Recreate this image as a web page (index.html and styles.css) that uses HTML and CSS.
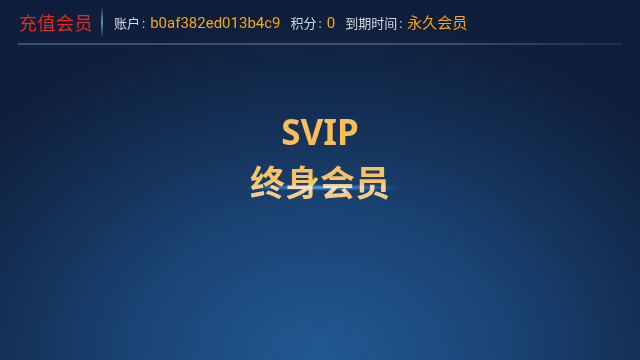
FILE: index.html
```html
<!DOCTYPE html>
<html lang="zh-CN">
<head>
  <meta charset="UTF-8" />
  <title>充值会员</title>
  <link rel="stylesheet" href="styles.css">
</head>
<body>
  <div id="app">
    <div id="header">
      <div class="title">充值会员</div>
      <div class="divider"></div>
      <div class="info">
        <span class="label">账户<span class="colon">:</span></span><span class="value">b0af382ed013b4c9</span>
        <span class="label">积分<span class="colon">:</span></span><span class="value">0</span>
        <span class="label">到期时间<span class="colon">:</span></span><span class="value cn">永久会员</span>
      </div>
    </div>
    <div class="rule"></div>
    <div id="main">
      <div class="svip">SVIP</div>
      <div class="life">
        <span class="life-text">终身会员</span>
        <span class="glow"></span>
      </div>
    </div>
  </div>
</body>
</html>
```

FILE: styles.css
```css
html, body {
  margin: 0;
  padding: 0;
  height: 100%;
  overflow: hidden;
  font-family: Roboto, "Noto Sans CJK SC", sans-serif;
  color: white;
}

#app {
  height: 100%;
  display: flex;
  flex-direction: column;
  background: radial-gradient(ellipse 70% 95% at 50% 100%, #215a93 0%, #1b4577 40%, #132d52 75%, #0f1f3b 100%);
  background-color: #0f1f3b;
}

#header {
  height: 43px;
  display: flex;
  align-items: center;
  padding-left: 19px;
  box-sizing: border-box;
}

.title {
  font-family: "Noto Sans CJK SC", sans-serif;
  font-size: 18px;
  color: #e8291c;
  letter-spacing: 0.5px;
  line-height: 1;
  margin-top: 1px;
}

.divider {
  width: 2px;
  height: 32px;
  margin: 0 11px 0 8px;
  background: linear-gradient(to bottom, rgba(90, 140, 190, 0), #5d8fbf 50%, rgba(90, 140, 190, 0));
}

.info {
  display: flex;
  align-items: baseline;
  font-size: 13px;
}

.label {
  color: #d5d9e0;
  font-family: "Noto Sans CJK SC", sans-serif;
}

.colon {
  font-family: Roboto, sans-serif;
  margin: 0 5px 0 2px;
}

.value {
  color: #f5a80f;
  font-size: 15px;
  margin-right: 10px;
}

.value.cn {
  font-family: "Noto Sans CJK SC", sans-serif;
}

.rule {
  height: 2px;
  margin: 0 0 0 18px;
  width: 604px;
  background: linear-gradient(to right, #3e4f67 0%, #3e4f67 70%, rgba(62, 79, 103, 0.3) 100%);
}

#main {
  flex-grow: 1;
  display: flex;
  flex-direction: column;
  align-items: center;
  padding-top: 66px;
}

.svip {
  font-family: "Noto Sans", sans-serif;
  font-weight: 700;
  font-size: 35px;
  line-height: 42px;
  color: #f8bf57;
}

.life {
  position: relative;
  margin-top: 8px;
}

.life-text {
  display: block;
  font-family: "Noto Sans CJK SC", sans-serif;
  font-weight: 700;
  font-size: 35px;
  line-height: 40px;
  background: linear-gradient(to bottom, #f9bf55 0%, #f8c56a 55%, #f4d294 75%, #f3c878 100%);
  -webkit-background-clip: text;
  background-clip: text;
  color: transparent;
}

.glow {
  position: absolute;
  left: -6px;
  right: -10px;
  top: 25px;
  height: 3px;
  border-radius: 2px;
  background: linear-gradient(to right, rgba(40, 130, 230, 0), rgba(60, 150, 240, 0.7) 30%, rgba(90, 180, 255, 0.9) 50%, rgba(60, 150, 240, 0.7) 70%, rgba(40, 130, 230, 0));
  filter: blur(1px);
  mix-blend-mode: screen;
}
```
